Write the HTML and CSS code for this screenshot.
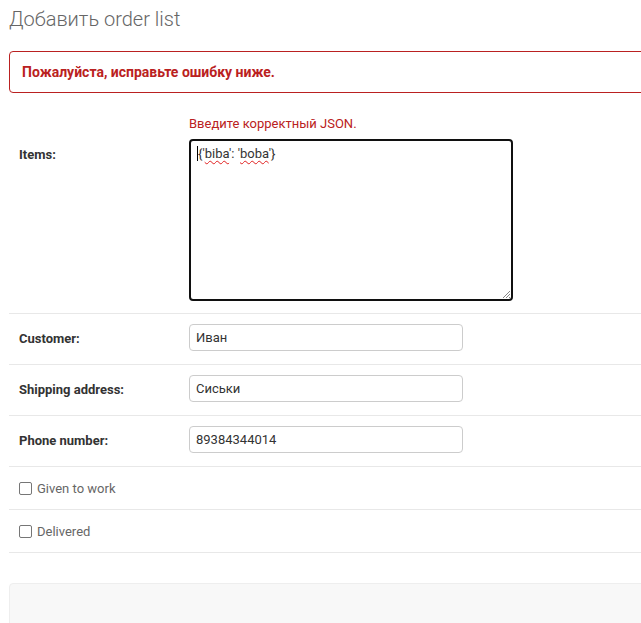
FILE: index.html
```html
<!DOCTYPE html>
<html lang="ru">
<head>
<meta charset="utf-8">
<title>Добавить order list</title>
<link rel="stylesheet" href="styles.css">
</head>
<body>
<div class="content">
  <h1 class="title">Добавить order list</h1>
  <p class="errornote">Пожалуйста, исправьте ошибку ниже.</p>
  <form class="module aligned">
    <div class="form-row errors">
      <ul class="errorlist"><li>Введите корректный JSON.</li></ul>
      <div class="flex-container">
        <label class="required items-label">Items:</label>
        <div class="textarea"><span class="caret"></span>{'<span class="spell">biba</span>': '<span class="spell">boba</span>'}<svg class="grip" width="9" height="9" viewBox="0 0 9 9"><path d="M8 1 L1 8 M8 4 L4 8 M8 7 L7 8" stroke="#888" stroke-width="1"/></svg></div>
      </div>
    </div>
    <div class="form-row">
      <div class="flex-container">
        <label class="required">Customer:</label>
        <div class="input">Иван</div>
      </div>
    </div>
    <div class="form-row">
      <div class="flex-container">
        <label class="required">Shipping address:</label>
        <div class="input">Сиськи</div>
      </div>
    </div>
    <div class="form-row">
      <div class="flex-container">
        <label class="required">Phone number:</label>
        <div class="input">89384344014</div>
      </div>
    </div>
    <div class="form-row">
      <div class="checkbox-row">
        <span class="checkbox"></span>
        <span class="checkbox-label">Given to work</span>
      </div>
    </div>
    <div class="form-row">
      <div class="checkbox-row">
        <span class="checkbox"></span>
        <span class="checkbox-label">Delivered</span>
      </div>
    </div>
  </form>
  <div class="submit-row"></div>
</div>
</body>
</html>
```
FILE: styles.css
```css
html {
  overflow: hidden;
}
body {
  margin: 0;
  background: #fff;
  font-family: Roboto, "Liberation Sans", sans-serif;
  color: #333;
}
.content {
  width: 760px;
  padding: 8px 0 0 9px;
}
.title {
  margin: 0 0 20px;
  font-size: 20px;
  font-weight: 300;
  line-height: 23px;
  color: #666;
}
.errornote {
  margin: 0 0 10px;
  padding: 10px 12px;
  font-size: 14px;
  font-weight: 700;
  line-height: 20px;
  color: #ba2121;
  border: 1px solid #ba2121;
  border-radius: 4px;
}
.module {
  margin: 0;
}
.form-row {
  padding: 10px;
  border-bottom: 1px solid #e8e8e8;
}
.form-row.errors {
  padding-bottom: 12px;
}
.errorlist {
  list-style: none;
  margin: 3px 0 8px 170px;
  padding: 0;
}
.errorlist li {
  font-size: 13px;
  line-height: 15px;
  color: #ba2121;
}
.flex-container {
  display: flex;
  align-items: flex-start;
}
label {
  display: block;
  box-sizing: border-box;
  width: 170px;
  flex: none;
  padding: 6px 10px 0 0;
  min-height: 30px;
  font-size: 13px;
  line-height: 18px;
}
label.items-label {
  padding-top: 7px;
}
label.required {
  font-weight: 700;
  color: #333;
}
.textarea {
  position: relative;
  box-sizing: border-box;
  width: 324px;
  height: 162px;
  padding: 5px 6px;
  border: 2px solid #101010;
  border-radius: 4px;
  font-size: 13px;
  line-height: 15px;
  color: #333;
}
.caret {
  display: inline-block;
  width: 1px;
  height: 15px;
  background: #000;
  vertical-align: -3px;
}
.spell {
  text-decoration: underline wavy #e02020;
  text-decoration-thickness: 1px;
  text-underline-offset: 2px;
}
.grip {
  position: absolute;
  right: 0;
  bottom: 0;
}
.input {
  box-sizing: border-box;
  width: 274px;
  height: 27px;
  padding: 5px 6px;
  border: 1px solid #ccc;
  border-radius: 4px;
  font-size: 13px;
  line-height: 15px;
  color: #333;
}
.checkbox-row {
  display: flex;
  align-items: center;
  height: 22px;
}
.checkbox {
  box-sizing: border-box;
  width: 13px;
  height: 13px;
  border: 1px solid #767676;
  border-radius: 2px;
  margin: 0 5px 0 0;
}
.checkbox-label {
  font-size: 13px;
  line-height: 15px;
  color: #666;
}
.submit-row {
  margin-top: 30px;
  height: 60px;
  background: #f8f8f8;
  border: 1px solid #eee;
  border-radius: 4px;
}
```
